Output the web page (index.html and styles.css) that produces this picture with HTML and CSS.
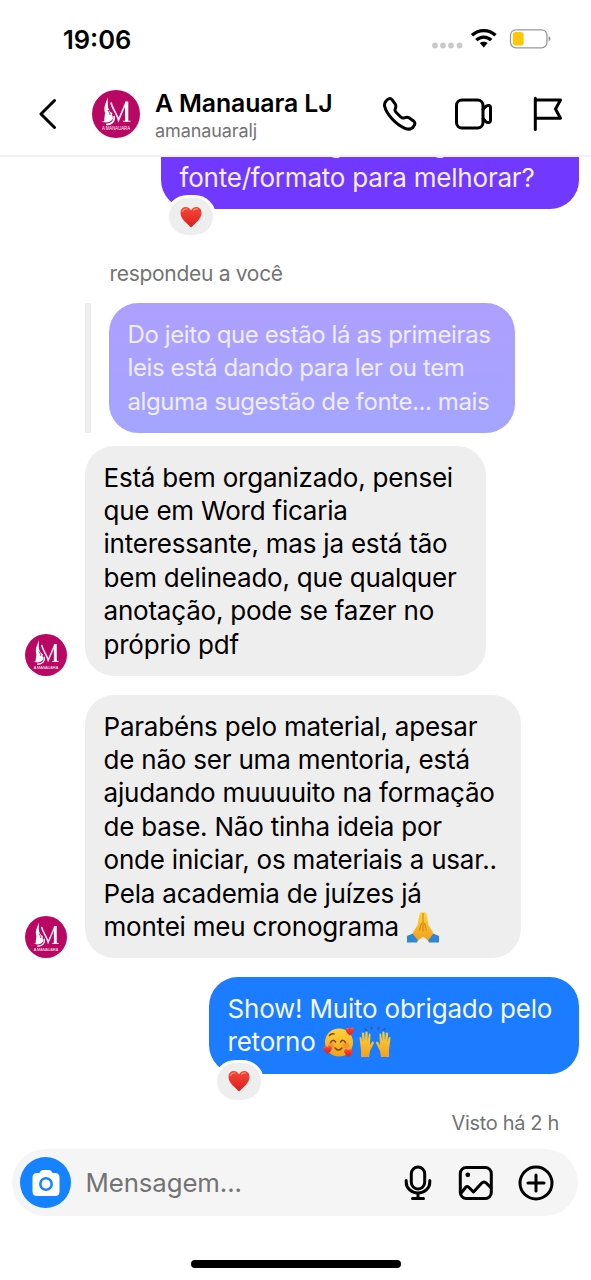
FILE: index.html
```
<!DOCTYPE html>
<html lang="pt-BR">
<head>
<meta charset="utf-8">
<title>A Manauara LJ</title>
<link rel="stylesheet" href="styles.css">
</head>
<body>
<svg class="defs" aria-hidden="true">
  <symbol id="brand" viewBox="0 0 48 48">
    <circle cx="24" cy="24" r="24" fill="#b90763"/>
    <path d="M19 12.500C20 18 25 24 26.500 30L34 12.500V31" fill="none" stroke="#fbe9f1" stroke-width="1.700"/>
    <path d="M33 11.500h3.300v19.500H33z" fill="#fff"/>
    <path d="M31 31.300h7.500" stroke="#fff" stroke-width="1.100"/>
    <path d="M16 7.500C13 14 11.500 18 13 23L12 31.500H9.500C13 33 18 33 20.500 29.500C22 27 19 25 20.500 23C17 22 15 18 16 7.500Z" fill="#fff"/>
    <path d="M15.500 24C17 26 18 28 14 30M22 26C23 31 20 34.500 14 34.500" fill="none" stroke="#fff" stroke-width="1.600"/>
    <path d="M16 20c1 2 2 3 2 5" fill="none" stroke="#b90763" stroke-width="1"/>
    <text x="24" y="40.300" text-anchor="middle" textLength="28" lengthAdjust="spacingAndGlyphs" class="brand-text">A MANAUARA</text>
  </symbol>
  <symbol id="heart" viewBox="0 0 22 22">
    <path d="M11 21.500C8 18 .5 13.500.5 7 .5 3 3 1 5.700 1 8.200 1 10 2.500 11 4.500 12 2.500 13.800 1 16.300 1 19 1 21.500 3 21.500 7 21.500 13.500 14 18 11 21.500Z" fill="url(#heart-fill)"/>
    <path d="M2.500 5.500Q4 2.500 7 3M13.500 4Q15 2.500 17.500 3" fill="none" stroke="#ff8a72" stroke-width="1.200" stroke-linecap="round"/>
  </symbol>
  <defs>
    <linearGradient id="heart-fill" x1="0" y1="0" x2="0" y2="1"><stop offset="0" stop-color="#f5483a"/><stop offset="1" stop-color="#dc1f1c"/></linearGradient>
    <linearGradient id="skin" x1="0" y1="0" x2="0" y2="1"><stop offset="0" stop-color="#ffd43a"/><stop offset="1" stop-color="#f2a01d"/></linearGradient>
  </defs>
</svg>
<div class="screen">
  <div class="status">
    <span class="time">19:06</span>
    <svg class="status-icons" width="120" height="24" viewBox="0 0 120 24">
      <g fill="#c9c9c9"><circle cx="5" cy="18.500" r="2.900"/><circle cx="13" cy="18.500" r="2.900"/><circle cx="21" cy="18.500" r="2.900"/><circle cx="29.500" cy="18.500" r="2.900"/></g>
      <g fill="none" stroke="#000" stroke-width="3.300"><path d="M42 8.300C48.500 2 59 2 65.500 8.300"/><path d="M46.300 13.200C50.500 9 57 9 61.200 13.200"/></g>
      <path d="M49.800 16C52 14.200 55.500 14.200 57.700 16L53.750 20.500Z"/>
      <rect x="80.500" y="2.800" width="36.500" height="18" rx="5.500" fill="none" stroke="#999" stroke-width="1.300"/>
      <path d="M118.600 9v5.500q2-1 2-2.750t-2-2.750z" fill="#999"/>
      <rect x="82.800" y="5" width="10.800" height="13.500" rx="2.800" fill="#ffc60a"/>
    </svg>
  </div>
  <header class="header">
    <svg class="back" width="18" height="32" viewBox="0 0 18 32"><path d="M15.500 2.500 2 16 15.500 29.500"/></svg>
    <svg class="avatar-lg" width="48" height="48"><use href="#brand"/></svg>
    <div class="who"><div class="name">A Manauara LJ</div><div class="handle">amanauaralj</div></div>
    <svg class="line-icon phone" width="36" height="36" viewBox="0 0 36 36"><path d="M4.200 4.800C6 2.500 8.500 1.700 10 3.600L13.300 8.200C14.500 10 13.800 11.500 13.200 13 12.700 14.200 13 15 14 16.200L19 21.200C20.200 22.200 21 22.400 22.300 21.800 23.800 21.100 25.300 20.600 27 21.800L31.500 25C33.500 26.500 33.200 28.500 31.500 30.500 29.500 33.600 26.500 33.700 23 32.300 18.500 30.500 14 27 10 22.700 6 18.500 3.500 14 2.600 10.200 2.100 8 2.900 6.300 4.200 4.800Z"/></svg>
    <svg class="line-icon video" width="40" height="36" viewBox="0 0 40 36"><rect x="3.500" y="4" width="26.500" height="28" rx="5.500"/><path d="M30 13.500 32.500 10.700C34.800 8.500 37.500 9.300 37.500 12V24C37.500 26.700 34.800 27.500 32.500 25.300L30 22.500"/></svg>
    <svg class="line-icon flag" width="32" height="36" viewBox="0 0 32 36"><path d="M3.300 2.300V33.500M3.300 4H28.500L23.500 13 28.500 22.300H3.300"/></svg>
  </header>

  <main class="chat">
    <section class="row first">
      <div class="bubble purple">
        <span class="line">ler ou tem alguma sugestão de</span>
        <span class="line">fonte/formato para melhorar?</span>
        <span class="reaction"><svg width="22" height="22"><use href="#heart"/></svg></span>
      </div>
    </section>
    <div class="reply-label">respondeu a você</div>
    <section class="quote">
      <div class="bubble lilac">
        <span class="line">Do jeito que estão lá as primeiras</span>
        <span class="line">leis está dando para ler ou tem</span>
        <span class="line">alguma sugestão de fonte... mais</span>
      </div>
    </section>
    <section class="row incoming organized">
      <svg class="avatar" width="42" height="42" viewBox="0 0 48 48"><use href="#brand"/></svg>
      <div class="bubble gray">
        <span class="line">Está bem organizado, pensei</span>
        <span class="line">que em Word ficaria</span>
        <span class="line">interessante, mas ja está tão</span>
        <span class="line">bem delineado, que qualquer</span>
        <span class="line">anotação, pode se fazer no</span>
        <span class="line">próprio pdf</span>
      </div>
    </section>
    <section class="row incoming congrats">
      <svg class="avatar" width="42" height="42" viewBox="0 0 48 48"><use href="#brand"/></svg>
      <div class="bubble gray">
        <span class="line">Parabéns pelo material, apesar</span>
        <span class="line">de não ser uma mentoria, está</span>
        <span class="line">ajudando muuuuito na formação</span>
        <span class="line">de base. Não tinha ideia por</span>
        <span class="line">onde iniciar, os materiais a usar..</span>
        <span class="line">Pela academia de juízes já</span>
        <span class="line">montei meu cronograma <svg class="emoji" role="img" aria-label="Mãos unidas" width="34" height="32" viewBox="0 0 34 32"><path d="M1 25 8 22 13 27 11 31.500H1Z" fill="#2f86d6"/><path d="M33 25 26 22 21 27 23 31.500H33Z" fill="#2f86d6"/><path d="M17 1.500C14.500.5 13.500 2 13.300 4L11.500 14 6.500 22.500 12 29.500 17 25.500 22 29.500 27.500 22.500 22.500 14 20.700 4C20.500 2 19.500.5 17 1.500Z" fill="url(#skin)"/><path d="M17 2V20.500M15.500 12 13.500 19.500M18.500 12 20.500 19.500" fill="none" stroke="#cd7d13" stroke-width="1"/></svg></span>
      </div>
    </section>
    <section class="row sent">
      <div class="bubble blue">
        <span class="line">Show! Muito obrigado pelo</span>
        <span class="line">retorno <svg class="emoji" role="img" aria-label="Rosto sorridente com corações" width="32" height="32" viewBox="0 0 32 32"><circle cx="16" cy="16.500" r="14" fill="url(#skin)"/><path d="M6.500 9.500Q8.500 7 11 8M7.500 16.500Q10 12.500 12.500 16M17.500 16Q20 12.500 22.500 16.500M12 22Q15.500 26 19 22" fill="none" stroke="#7b3f0c" stroke-width="1.500" stroke-linecap="round"/><g fill="#ee7540" opacity=".5"><circle cx="8" cy="19.500" r="3"/><circle cx="23" cy="19.500" r="3"/></g><use href="#heart" x="22.500" y="1" width="9" height="9"/><use href="#heart" x="0" y="19.500" width="9" height="9"/><use href="#heart" x="21" y="22.500" width="9" height="9"/></svg><svg class="emoji hands" role="img" aria-label="Mãos para cima" width="34" height="32" viewBox="0 0 34 32"><g id="raised-hand"><path d="M3 31V24L1.500 12C1.500 10.500 3 10.500 3.500 12L4.500 16.500 4 7.500C4 6 6 6 6.200 7.500L7 15 7.500 6.500C7.700 5 9.500 5 9.600 6.500L9.700 15.500 10.800 8.500C11.200 7 12.700 7.500 12.500 9L12 19 14 16C15 15 16.500 16 15.800 17.500L12 25 11 31Z" fill="url(#skin)"/></g><use href="#raised-hand" transform="matrix(-1 0 0 1 34 0)"/><path d="M7 2.500 8.500 4M13.300 1.300 13.800 3M20.700 1.300 20.200 3M27 2.500 25.500 4" stroke="#345b98" stroke-width="1.700" stroke-linecap="round"/></svg></span>
        <span class="reaction"><svg width="22" height="22"><use href="#heart"/></svg></span>
      </div>
    </section>
    <div class="seen">Visto há 2 h</div>
  </main>

  <footer class="composer">
    <span class="camera"><svg width="30" height="28" viewBox="0 0 30 28"><path d="M6 4H8C9.500 4 9 1 12 1H18C21 1 20.500 4 22 4H24Q28.500 4 28.500 8.500V22.500Q28.500 27 24 27H6Q1.500 27 1.500 22.500V8.500Q1.500 4 6 4Z" fill="#fff"/><circle cx="15" cy="15" r="5.700" fill="#fff" stroke="#1582ff" stroke-width="2.500"/></svg></span>
    <span class="placeholder">Mensagem...</span>
    <svg class="line-icon mic" width="28" height="36" viewBox="0 0 28 36"><rect x="7.300" y="2" width="13.400" height="22" rx="6.700"/><path d="M2.200 15.500V17C2.200 23.500 7.500 28 14 28S25.800 23.500 25.800 17V15.500M14 28V33.500M8.500 33.500H19.500"/></svg>
    <svg class="line-icon photo" width="36" height="36" viewBox="0 0 36 36"><rect x="2.300" y="2.500" width="31" height="31" rx="6"/><path d="M2.800 28.500 7.500 22.500Q9.300 20.500 11 22.500L15.500 27 23.500 18.300Q26 15.700 28.500 18.300L33 23"/><circle cx="9.800" cy="9.800" r="2.400" class="dot"/></svg>
    <svg class="line-icon plus" width="36" height="36" viewBox="0 0 36 36"><circle cx="18" cy="18" r="16"/><path d="M18 10V26M10 18H26"/></svg>
  </footer>
  <div class="home"></div>
</div>
</body>
</html>
```
FILE: styles.css
```
* { box-sizing: border-box; }
body { margin: 0; background: #fff; font-family: Inter, "Liberation Sans", sans-serif; color: #000; }
svg { display: block; flex: none; }
.defs { position: absolute; width: 0; height: 0; }
.brand-text { font-family: "Liberation Sans", sans-serif; font-size: 4.8px; fill: #fff; }
.screen { width: 591px; height: 1280px; display: flex; flex-direction: column; overflow: hidden; }
.status { height: 72px; flex: none; display: flex; justify-content: space-between; padding: 24px 41px 0 63px; }
.time { font-size: 25.5px; font-weight: 600; line-height: 32px; letter-spacing: 0; }
.status-icons { margin-top: 3px; overflow: visible; }
.header { height: 85px; flex: none; display: flex; align-items: center; padding: 0 25px 0 39px; border-bottom: 2px solid #f2f2f2; }
.back { fill: none; stroke: #000; stroke-width: 3; stroke-linecap: round; stroke-linejoin: round; }
.avatar-lg { margin-left: 34.5px; }
.who { width: 242px; padding-left: 15.5px; padding-top: 2px; }
.name { font-size: 24.8px; font-weight: 600; line-height: 32px; letter-spacing: -.1px; white-space: nowrap; }
.handle { font-size: 18px; line-height: 24px; letter-spacing: -.1px; color: #737373; }
.line-icon { fill: none; stroke: #000; stroke-width: 3; stroke-linecap: round; stroke-linejoin: round; }
.line-icon .dot { fill: #000; stroke: none; }
.video { margin-left: 35px; }
.flag { margin-left: 39px; }
.chat { height: 983px; flex: none; overflow: hidden; display: flex; flex-direction: column; }
.row { display: flex; flex: none; }
.first { margin-top: -30px; }
.first, .sent { justify-content: flex-end; padding-right: 12px; }
.bubble { position: relative; border-radius: 29px; padding: 15px 18.5px; font-size: 26px; line-height: 33.4px; letter-spacing: -.21px; }
.line { display: block; white-space: nowrap; }
.purple { width: 418px; height: 82px; padding-top: 0; background: #7138ff; color: #f6efff; }
.purple .line:first-child { line-height: 32px; padding-bottom: 2px; }
.reaction { position: absolute; left: 4.5px; bottom: -29px; width: 50px; height: 43px; border: 3px solid #fff; border-radius: 22px; background: #eee; display: flex; align-items: center; justify-content: center; }
.reply-label { margin: 51px 0 0 109.5px; font-size: 21px; line-height: 28px; letter-spacing: -.3px; color: #737373; }
.quote { flex: none; display: flex; margin: 15px 0 0 85px; border-left: 6px solid #eee; padding-left: 18px; }
.lilac { width: 406px; height: 130px; font-size: 24px; letter-spacing: -.4px; background: linear-gradient(#ae9fff, #a4a5ff); color: #efedff; }
.incoming { align-items: flex-end; padding-left: 25px; }
.incoming .gray { margin-left: 18px; background: #eee; }
.organized { margin-top: 12.500px; }
.organized .gray { width: 401px; height: 230px; }
.congrats { margin-top: 19px; }
.congrats .gray { width: 436px; height: 263px; }
.emoji { display: inline-block; vertical-align: -7px; }
.hands { margin-left: 3.5px; }
.sent { margin-top: 19px; }
.blue { width: 370px; height: 97px; background: #1b7cff; color: #f4f8ff; }
.seen { margin: 35px 32px 0 0; text-align: right; font-size: 20px; line-height: 28px; letter-spacing: -.33px; color: #737373; }
.composer { flex: none; width: 566px; height: 67px; margin: 9px 0 0 12px; padding: 0 24px 0 8px; border-radius: 34px; background: #f5f5f5; display: flex; align-items: center; }
.camera { width: 51px; height: 51px; border-radius: 50%; background: #1582ff; display: flex; align-items: center; justify-content: center; }
.placeholder { width: 320px; padding-left: 14.5px; font-size: 25.800px; color: #737373; letter-spacing: -.1px; }
.mic { margin-left: 13px; }
.photo { margin-left: 26px; }
.plus { margin-left: 24px; }
.home { flex: none; width: 210px; height: 8px; margin: 44px 0 0 191px; border-radius: 4px; background: #000; }
```
